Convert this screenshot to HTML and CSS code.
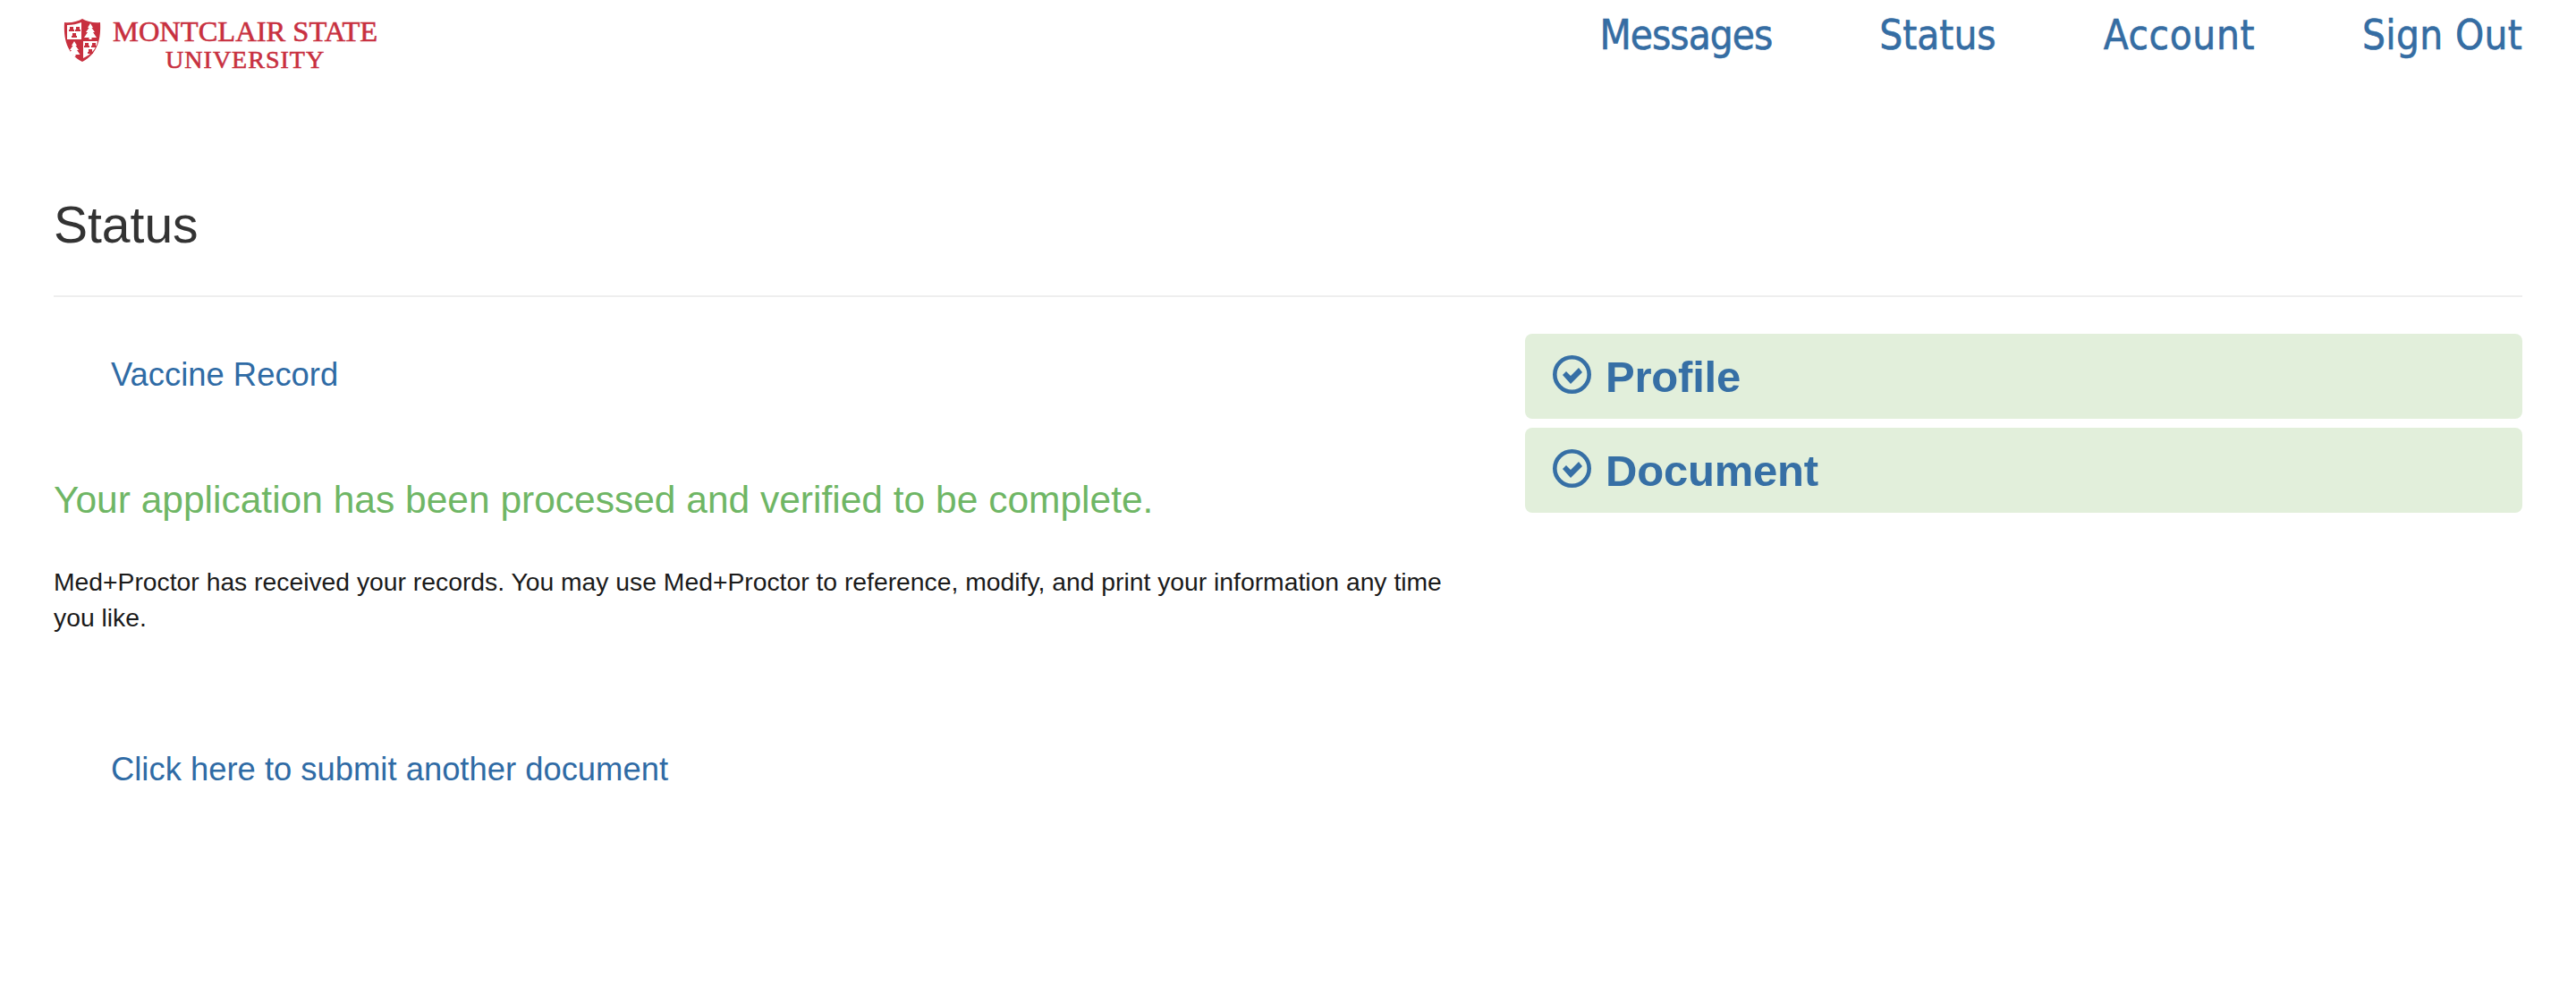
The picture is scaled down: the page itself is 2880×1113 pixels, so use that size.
FILE: index.html
```html
<!DOCTYPE html>
<html lang="en">
  <head>
    <meta charset="UTF-8" />
    <title>Status</title>
    <link rel="stylesheet" href="styles.css">
  </head>
  <body>
    <div class="top-bar">
      <a class="logo" href="#">
        <svg class="shield" viewBox="0 0 42 50" width="42" height="50">
          <path d="M21 1 C16 4 8 6 1 5 C0 22 3 40 21 49 C39 40 42 22 41 5 C34 6 26 4 21 1 Z" fill="#c8303f" />
          <path d="M4 8 C10 8 15 7 20 5 V24 H4 Z" fill="#fff" />
          <path d="M22 26 H38 C37 34 31 41 22 45 Z" fill="#fff" />
          <path d="M30 6 L33 11 H31.5 L35 16 H33 L37 22 H31.5 V24 H28.5 V22 H23 L27 16 H25 L28.5 11 H27 Z" fill="#fff" />
          <path d="M12 26 L15 31 H13.5 L17 36 H15 L18.5 41 H13.5 V43 H10.5 V41 H5.5 L9 36 H7 L10.5 31 H9 Z" fill="#fff" />
          <path d="M7 10 h4 v3 h1 v2 h-6 v-2 h1 Z M14 10 h4 v3 h1 v2 h-6 v-2 h1 Z M10 17 h4 v3 h1 v2 h-6 v-2 h1 Z" fill="#c8303f" />
          <path d="M24 28 h4 v3 h1 v2 h-6 v-2 h1 Z M32 28 h4 v3 h1 v2 h-6 v-2 h1 Z M28 35 h4 v3 h1 v2 h-6 v-2 h1 Z" fill="#c8303f" />
        </svg>
        <span class="logo-text">
          <span class="logo-line">Montclair State</span>
          <span class="logo-line logo-small">University</span>
        </span>
      </a>
      <nav class="top-nav">
        <a class="nav-tight" href="#">Messages</a>
        <a href="#">Status</a>
        <a class="nav-wide" href="#">Account</a>
        <a class="nav-wide-sm" href="#">Sign Out</a>
      </nav>
    </div>

    <div class="container">
      <h1 class="page-title">Status</h1>
      <div class="columns">
        <div class="main-col">
          <a class="link-row" href="#">Vaccine Record</a>
          <h3 class="success-text">Your application has been processed and verified to be complete.</h3>
          <p class="info-text">Med+Proctor has received your records. You may use Med+Proctor to reference, modify, and print your information any time you like.</p>
          <a class="link-row submit-link" href="#">Click here to submit another document</a>
        </div>
        <div class="side-col">
          <div class="step-box">
            <svg class="check" viewBox="0 0 43 43" width="43" height="43">
              <circle cx="21.5" cy="21.5" r="19.2" fill="none" stroke="#366fa5" stroke-width="4.6" />
              <path d="M11 22 L15 18 L20 23 L29 14 L33 19 L20 32 Z" fill="#366fa5" />
            </svg>
            <span>Profile</span>
          </div>
          <div class="step-box">
            <svg class="check" viewBox="0 0 43 43" width="43" height="43">
              <circle cx="21.5" cy="21.5" r="19.2" fill="none" stroke="#366fa5" stroke-width="4.6" />
              <path d="M11 22 L15 18 L20 23 L29 14 L33 19 L20 32 Z" fill="#366fa5" />
            </svg>
            <span>Document</span>
          </div>
        </div>
      </div>
    </div>
  </body>
</html>
```

FILE: styles.css
```css
/* Reset default margin and padding */
body,
h1,
h3,
p {
  margin: 0;
  padding: 0;
}

body {
  font-family: "Liberation Sans", Arial, sans-serif;
  background-color: #ffffff;
  color: #1a1a1a;
}

a {
  color: #2f6ba5;
  text-decoration: none;
}

/* Top bar */
.top-bar {
  display: flex;
  justify-content: space-between;
  align-items: flex-start;
  padding: 0 60px 0 71px;
  height: 100px;
}

.logo {
  display: flex;
  align-items: flex-start;
  gap: 13px;
  padding-top: 20px;
}

.logo-text {
  display: flex;
  flex-direction: column;
  align-items: center;
  font-family: "Liberation Serif", serif;
  color: #c8303f;
  text-transform: uppercase;
  font-size: 32.5px;
  line-height: 31px;
  -webkit-text-stroke: 0.6px #c8303f;
}

.logo-small {
  font-size: 28px;
  letter-spacing: 1px;
}

.top-nav {
  display: flex;
  gap: 120px;
  padding-top: 12px;
}

.top-nav a {
  font-family: "DejaVu Sans", sans-serif;
  font-stretch: condensed;
  font-size: 45.5px;
  line-height: 56px;
  color: #356da3;
  -webkit-text-stroke: 0.6px #356da3;
}

.top-nav .nav-tight {
  letter-spacing: -1px;
}

.top-nav .nav-wide {
  letter-spacing: 0.6px;
}

.top-nav .nav-wide-sm {
  letter-spacing: 0.3px;
}

/* Page */
.container {
  padding: 0 60px;
}

.page-title {
  font-size: 57px;
  font-weight: 400;
  line-height: 70px;
  color: #333333;
  margin-top: 116px;
  padding-bottom: 44px;
  border-bottom: 2px solid #eeeeee;
}

.columns {
  display: flex;
  gap: 60px;
}

.main-col {
  width: 1585px;
}

.side-col {
  flex: 1;
  padding-top: 41px;
}

.link-row {
  display: block;
  font-size: 36.4px;
  line-height: 52px;
  padding-left: 64px;
  margin-top: 61px;
}

.success-text {
  font-size: 42.5px;
  font-weight: 400;
  line-height: 56px;
  color: #6fb665;
  margin-top: 86px;
}

.info-text {
  font-size: 28.3px;
  line-height: 40px;
  margin-top: 43px;
}

.submit-link {
  margin-top: 124px;
}

.step-box {
  display: flex;
  align-items: center;
  gap: 16px;
  height: 95px;
  padding: 0 31px;
  margin-bottom: 10px;
  background-color: #e2efdb;
  border-radius: 8px;
  color: #366fa5;
  font-size: 49px;
  letter-spacing: -0.2px;
  font-weight: 700;
}

.check {
  margin-top: -5px;
}
```
